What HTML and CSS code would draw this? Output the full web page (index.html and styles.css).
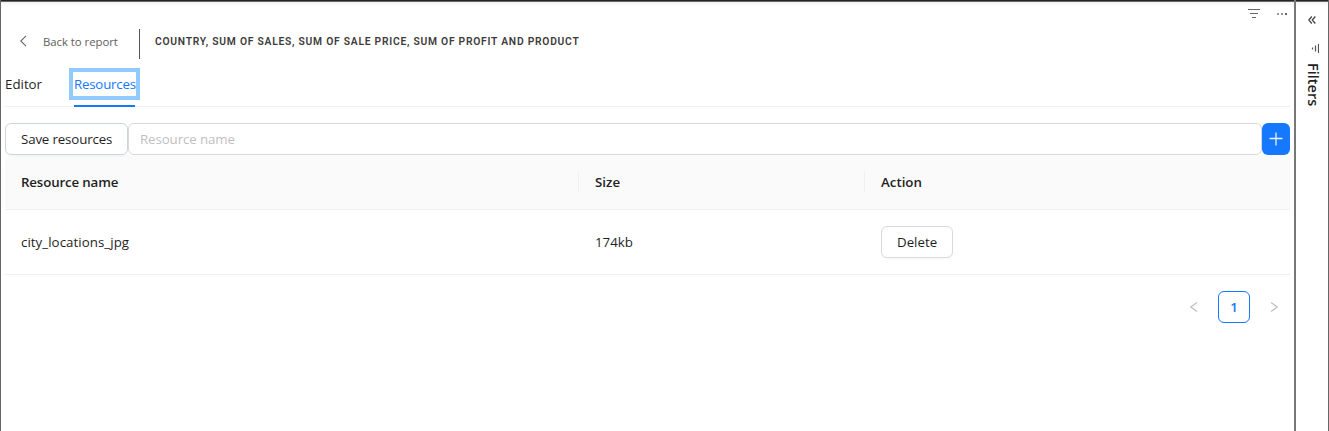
FILE: index.html
```html
<!DOCTYPE html>
<html lang="en">
<head>
<meta charset="utf-8">
<title>Resources</title>
<link rel="stylesheet" href="styles.css">
</head>
<body>
<div class="app">
  <main class="visual">
    <div class="toolbar">
      <svg width="12" height="9" viewBox="0 0 12 9" fill="none" stroke="#666"><path d="M0 .5h12M2 4.500h8M4 8.500h4"/></svg>
      <svg width="12" height="3" viewBox="0 0 12 3"><path d="M1 1h2v2H1zM5 1h2v2H5z" fill="#999"/><path d="M9 1h2v2H9z" fill="#666"/></svg>
    </div>
    <header class="header">
      <svg class="back-icon" width="7" height="12" viewBox="0 0 7 12" fill="none" stroke="#666" stroke-width="1.100"><path d="M6 .8.800 6 6 11.200"/></svg>
      <span class="back"><span class="back-label">Back to report</span></span>
      <h1 class="title">Country, Sum of Sales, Sum of Sale Price, Sum of Profit and Product</h1>
    </header>
    <nav class="tabs">
      <a class="tab tab-editor">Editor</a>
      <a class="tab tab-active"><span>Resources</span></a>
    </nav>
    <div class="form">
      <button class="btn save">Save resources</button>
      <input class="field" placeholder="Resource name">
      <button class="add"><svg width="14" height="14" viewBox="0 0 14 14" stroke="#fff" stroke-opacity=".9" stroke-width="1.300"><path d="M7 .5v13M.5 6.500h13"/></svg></button>
    </div>
    <div class="table">
      <div class="row head">
        <div class="cell"><span class="label-name">Resource name</span></div>
        <div class="cell">Size</div>
        <div class="cell">Action</div>
      </div>
      <div class="row">
        <div class="cell"><span class="file">city_locations_jpg</span></div>
        <div class="cell">174kb</div>
        <div class="cell"><button class="btn delete">Delete</button></div>
      </div>
    </div>
    <div class="pager">
      <svg width="8" height="10" viewBox="0 0 8 10" fill="none" stroke="#bfbfbf" stroke-width="1.200"><path d="M7 .5.800 5 7 9.500"/></svg>
      <span class="page">1</span>
      <svg width="8" height="10" viewBox="0 0 8 10" fill="none" stroke="#bfbfbf" stroke-width="1.200"><path d="M1 .5 7.200 5 1 9.500"/></svg>
    </div>
  </main>
  <aside class="rail">
    <svg width="8" height="8" viewBox="0 0 8 8" fill="none" stroke="#444" stroke-width="1.300"><path d="M3.800.5.800 4l3 3.500M7.300.5l-3 3.500 3 3.500"/></svg>
    <svg class="rail-filter" width="8" height="9" viewBox="0 0 8 9" fill="none" stroke="#555"><path d="M7.500 0v9M4.500 1.500v6M1.500 3.500v2" stroke-width="1.200"/></svg>
    <span class="rail-label">Filters</span>
  </aside>
</div>
</body>
</html>
```
FILE: styles.css
```css
* { box-sizing: border-box; }
body {
  margin: 0;
  background: #fff;
  color: #1f1f1f;
  font: 13.3px/22px "Open Sans", "Noto Sans", sans-serif;
  overflow: hidden;
}
.app {
  display: flex;
  height: 431px;
  border: solid #666;
  border-width: 0 1px;
  background: linear-gradient(#252323 0 1px, #666 1px 2px, #f3f3f3 2px, #fff 6px);
}
.visual { width: 1293px; padding: 0 4px; }
.toolbar {
  display: flex;
  justify-content: flex-end;
  align-items: center;
  gap: 16px;
  height: 27px;
  padding-right: 2px;
}
.header { display: flex; align-items: center; height: 33px; }
.back-icon { margin: -5px 0 0 15px; }
.back {
  width: 97px;
  height: 30px;
  margin-left: 16px;
  color: #605e5c;
  font-size: 11.400px;
  line-height: 25px;
  border-right: 1px solid #555;
  white-space: nowrap;
}
.back-label { letter-spacing: -.05px; }
.title {
  margin: -3px 0 0 15px;
  font: 600 10.300px/16px Roboto, sans-serif;
  letter-spacing: .75px;
  color: #3c3b3a;
  text-transform: uppercase;
  white-space: nowrap;
}
.tabs { display: flex; gap: 32px; height: 46px; margin-top: 1px; border-bottom: 1px solid #f0f0f0; }
.tab { height: 46px; padding-top: 12px; white-space: nowrap; }
.tab-editor { width: 37px; }
.tab-active { width: 61px; color: #1677ff; border-bottom: 2px solid #1677ff; }
.tab-active span {
  display: block;
  width: 63px;
  height: 24px;
  margin: -1px 0 0 -1px;
  padding: 1px 0 0 1px;
  outline: 4px solid #91caff;
  letter-spacing: -.22px;
}
.form { display: flex; height: 32px; margin-top: 16px; }
.btn {
  height: 32px;
  padding: 0 15px;
  border: 1px solid #d9d9d9;
  border-radius: 6px;
  background: #fff;
  color: inherit;
  font: inherit;
  box-shadow: 0 2px 0 rgba(0, 0, 0, .02);
  white-space: nowrap;
}
.save { width: 123px; border-color: #ced4df; letter-spacing: -.15px; }
.field {
  flex: 1;
  min-width: 0;
  padding: 0 11px;
  border: 1px solid #d9d9d9;
  border-radius: 6px;
  font: inherit;
  letter-spacing: -.1px;
}
.field::placeholder { color: #bfbfbf; }
.add {
  display: grid;
  place-items: center;
  width: 28px;
  padding: 0;
  border: 0;
  border-radius: 6px;
  background: #1677ff;
}
.row {
  display: grid;
  grid-template-columns: 574px 286px 1fr;
  align-items: center;
  height: 65px;
  border-bottom: 1px solid #f0f0f0;
}
.head {
  height: 55px;
  background: #fafafa;
  border-radius: 8px 8px 0 0;
  font-weight: 600;
}
.cell { padding: 0 16px; }
.head .cell:not(:last-child) { border-right: 1px solid #f0f0f0; }
.label-name { letter-spacing: -.15px; }
.file { letter-spacing: .05px; }
.delete { display: block; width: 72px; }
.pager {
  display: flex;
  justify-content: flex-end;
  align-items: center;
  gap: 20px;
  padding: 16px 12px 0;
}
.page {
  width: 32px;
  height: 32px;
  border: 1px solid #1677ff;
  border-radius: 6px;
  color: #1677ff;
  font-weight: 600;
  line-height: 31px;
  text-align: center;
}
.rail {
  display: flex;
  flex-direction: column;
  align-items: center;
  width: 34px;
  padding-top: 16px;
  border-left: 2px solid #777;
}
.rail-filter { margin: 20px 0 0 6px; }
.rail-label {
  margin: 10px 0 0 1px;
  font-size: 14.500px;
  font-weight: 600;
  line-height: 20px;
  writing-mode: vertical-rl;
}
```
